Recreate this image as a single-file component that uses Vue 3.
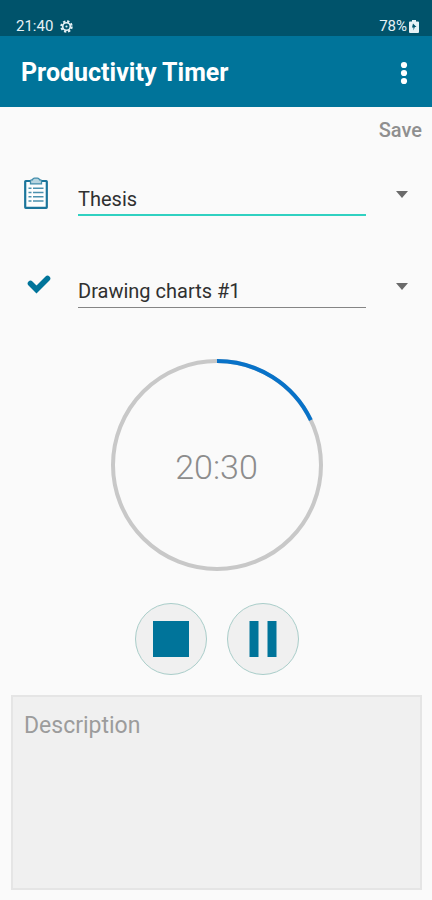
<script setup>
import { ref } from 'vue'

const project = ref('Thesis')
const task = ref('Drawing charts #1')
const description = ref('')
const remaining = ref('20:30')
const progress = ref(17.9)
</script>

<template>
  <div class="screen">
    <div class="status">
      <div class="status-group">
        <span>21:40</span>
        <svg class="gear" viewBox="0 0 24 24" aria-hidden="true">
          <circle cx="12" cy="12" r="9.5" fill="none" stroke="currentColor" stroke-width="4" stroke-dasharray="4.2 3.26" />
          <circle cx="12" cy="12" r="7" fill="none" stroke="currentColor" stroke-width="3" />
          <circle cx="12" cy="12" r="2" fill="currentColor" />
        </svg>
      </div>
      <div class="status-group battery-group">
        <span>78%</span>
        <svg class="battery" viewBox="0 0 10 13" aria-hidden="true">
          <path d="M3 0h4v1.5h2a1 1 0 0 1 1 1V12a1 1 0 0 1-1 1H1a1 1 0 0 1-1-1V2.500a1 1 0 0 1 1-1h2z" fill="currentColor" />
          <path d="M4 3.500L7.500 7H5.800L4.500 10.500V7.500H3z" fill="#00536b" />
        </svg>
      </div>
    </div>

    <header class="bar">
      <h1>Productivity Timer</h1>
      <button class="more" type="button" aria-label="More options">
        <svg viewBox="0 0 8 24" aria-hidden="true">
          <circle cx="4" cy="4" r="3.100" />
          <circle cx="4" cy="12" r="3.100" />
          <circle cx="4" cy="20" r="3.100" />
        </svg>
      </button>
    </header>

    <main>
      <div class="actions">
        <button class="save" type="button">Save</button>
      </div>

      <div class="fields">
        <div class="field">
          <label for="project" aria-label="Project">
            <svg class="clipboard" viewBox="0 0 24 32" aria-hidden="true">
              <rect x="1.200" y="4" width="21.600" height="26.800" rx="0.500" fill="#fdfefe" stroke="#1b759b" stroke-width="2.200" />
              <path d="M6.500 6.800V3.800Q6.500 2.800 7.500 2.800H8.500Q9 1.200 10.500 1.200H13.500Q15 1.200 15.500 2.800H16.500Q17.500 2.800 17.500 3.800V6.800z" fill="#b7d5e0" stroke="#3f8baa" stroke-width="1.300" />
              <g stroke="#4b91ae" stroke-width="1.500">
                <path d="M4.500 11.300h3M9 11.300h10.500M4.500 15.500h3M9 15.500h10.500M4.500 19.800h3M9 19.800h10.500M4.500 24.100h3M9 24.100h10.500" />
              </g>
            </svg>
          </label>
          <input id="project" v-model="project" class="focused" type="text" />
          <button class="arrow" type="button" aria-label="Choose project">
            <svg viewBox="0 0 12 7" aria-hidden="true"><path d="M0 0h12L6 7z" /></svg>
          </button>
        </div>

        <div class="field">
          <label for="task" aria-label="Task">
            <svg class="check" viewBox="0 0 24 32" aria-hidden="true">
              <path d="M6.500 14.500l6 6L23.500 9.500" fill="none" stroke="#00749a" stroke-width="5.600" stroke-linecap="round" />
            </svg>
          </label>
          <input id="task" v-model="task" type="text" />
          <button class="arrow" type="button" aria-label="Choose task">
            <svg viewBox="0 0 12 7" aria-hidden="true"><path d="M0 0h12L6 7z" /></svg>
          </button>
        </div>
      </div>

      <div class="timer" role="timer">
        <svg viewBox="0 0 212 212" aria-hidden="true">
          <circle cx="106" cy="106" r="104" fill="none" stroke="#c8c8c8" stroke-width="4" />
          <circle
            cx="106" cy="106" r="104" fill="none" stroke="#0872c8" stroke-width="4"
            pathLength="100" :stroke-dasharray="`${progress} 100`" transform="rotate(-90 106 106)"
          />
        </svg>
        <span>{{ remaining }}</span>
      </div>

      <div class="controls">
        <button type="button" aria-label="Stop">
          <svg viewBox="0 0 36 36" aria-hidden="true"><path d="M0 0h36v36H0z" /></svg>
        </button>
        <button type="button" aria-label="Pause">
          <svg viewBox="0 0 36 36" aria-hidden="true"><path d="M4.500 0h9v36h-9zM22.500 0h9v36h-9z" /></svg>
        </button>
      </div>

      <textarea v-model="description" placeholder="Description" aria-label="Description"></textarea>
    </main>
  </div>
</template>

<style>
body {
  background: #fafafa;
}
</style>

<style scoped>
.screen {
  display: flex;
  flex-direction: column;
  min-height: 100vh;
  background: #fafafa;
  font-family: Roboto, "Liberation Sans", sans-serif;
}

.screen * {
  box-sizing: border-box;
}

svg {
  display: block;
}

button {
  padding: 0;
  border: 0;
  background: none;
  font: inherit;
  cursor: pointer;
}

.status {
  display: flex;
  justify-content: space-between;
  padding: 17px 13px 1px 16px;
  background: #00536b;
  color: #e6f1f5;
  font-size: 15px;
  line-height: 18px;
}

.status-group {
  display: flex;
  align-items: center;
  gap: 7px;
}

.battery-group {
  gap: 2px;
}

.gear {
  width: 13px;
  height: 13px;
}

.battery {
  width: 10px;
  height: 13px;
}

.bar {
  display: flex;
  align-items: center;
  justify-content: space-between;
  height: 71px;
  padding: 2px 16px 0 21px;
  background: #00749a;
  color: #fff;
}

h1 {
  margin: 0;
  font-size: 25px;
  font-weight: 700;
  line-height: 32px;
}

.more {
  display: grid;
  place-items: center;
  width: 24px;
  height: 40px;
}

.more svg {
  width: 8px;
  height: 24px;
  fill: #fff;
}

main {
  display: flex;
  flex: 1;
  flex-direction: column;
  padding: 11px 10px 10px 11px;
}

.actions {
  display: flex;
  justify-content: flex-end;
}

.save {
  color: #8f8f8f;
  font-size: 20px;
  font-weight: 500;
  line-height: 24px;
}

.fields {
  display: flex;
  flex-direction: column;
  gap: 52px;
  padding: 35px 2px 0 13px;
}

.field {
  display: flex;
  align-items: flex-start;
  height: 40px;
}

.field label {
  flex: none;
  width: 54px;
}

.clipboard,
.check {
  width: 24px;
  height: 32px;
  overflow: visible;
}

.field input {
  flex: 1;
  min-width: 0;
  height: 39px;
  padding: 6px 0 0;
  border: 0;
  border-bottom: 1px solid #858585;
  border-radius: 0;
  outline: 0;
  background: none;
  color: #303030;
  font: 20px/24px Roboto, "Liberation Sans", sans-serif;
}

.field .focused {
  border-bottom: 2px solid #30d1c1;
}

.arrow {
  display: grid;
  flex: none;
  place-items: center;
  width: 36px;
  height: 34px;
  margin-left: 18px;
}

.arrow svg {
  width: 12px;
  height: 7px;
  fill: #6a6a6a;
}

.timer {
  display: grid;
  place-items: center;
  align-self: center;
  width: 212px;
  margin-top: 50px;
}

.timer svg,
.timer span {
  grid-area: 1 / 1;
}

.timer svg {
  width: 100%;
}

.timer span {
  padding-top: 4px;
  color: #8c8c8c;
  font-size: 34px;
  font-weight: 300;
  line-height: 40px;
}

.controls {
  display: flex;
  justify-content: center;
  gap: 20px;
  padding: 32px 0 20px;
}

.controls button {
  display: grid;
  place-items: center;
  width: 72px;
  height: 72px;
  border: 1px solid #a9cdc9;
  border-radius: 50%;
  background: #f0f0f0;
}

.controls svg {
  width: 36px;
  height: 36px;
  fill: #00749a;
}

textarea {
  display: block;
  flex: 1;
  width: 100%;
  min-height: 120px;
  padding: 15px 11px;
  border: 2px solid #e5e5e5;
  border-radius: 0;
  outline: 0;
  background: #f0f0f0;
  color: #303030;
  font: 23px/28px Roboto, "Liberation Sans", sans-serif;
  resize: none;
}

textarea::placeholder {
  color: #9c9c9c;
  opacity: 1;
}
</style>
